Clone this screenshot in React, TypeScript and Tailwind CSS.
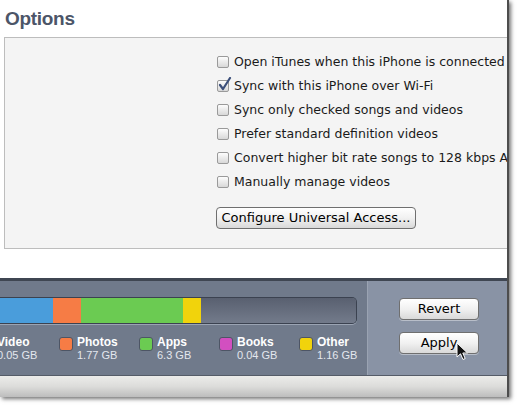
import React from "react";

type Opt = { label: string; checked?: boolean };

const options: Opt[] = [
  { label: "Open iTunes when this iPhone is connected" },
  { label: "Sync with this iPhone over Wi-Fi", checked: true },
  { label: "Sync only checked songs and videos" },
  { label: "Prefer standard definition videos" },
  { label: "Convert higher bit rate songs to 128 kbps AAC" },
  { label: "Manually manage videos" },
];

const legend = [
  { name: "Video", size: "0.05 GB", color: "bg-[#4a9ddb]" },
  { name: "Photos", size: "1.77 GB", color: "bg-[#f67c45]" },
  { name: "Apps", size: "6.3 GB", color: "bg-[#6bcb52]" },
  { name: "Books", size: "0.04 GB", color: "bg-[#d24fc0]" },
  { name: "Other", size: "1.16 GB", color: "bg-[#f1d30c]" },
];

function Checkbox({ checked }: { checked?: boolean }) {
  return (
    <div className="relative w-[12px] h-[12px] rounded-[2px] border border-[#9a9a9a] bg-gradient-to-b from-[#fdfdfd] to-[#d8d8d8] shrink-0">
      {checked && (
        <svg className="absolute left-[0px] top-[-4px]" width="14" height="15" viewBox="0 0 14 15">
          <path d="M2 8 L5 12 L12 1" fill="none" stroke="#3c4f7a" strokeWidth="2.2" strokeLinecap="round" strokeLinejoin="round" />
        </svg>
      )}
    </div>
  );
}

function MacButton({ children, className = "" }: { children: React.ReactNode; className?: string }) {
  return (
    <div
      className={`flex items-center justify-center h-[22px] rounded-[4px] border border-[#6f6f6f] bg-gradient-to-b from-[#ffffff] via-[#f1f1f1] to-[#d9d9d9] shadow-[0_1px_0_rgba(255,255,255,0.4)] text-[13px] text-black ${className}`}
      style={{ fontFamily: "'DejaVu Sans', sans-serif" }}
    >
      {children}
    </div>
  );
}

export default function App() {
  return (
    <div className="relative w-[517px] h-[406px] bg-white overflow-hidden">
      <div className="w-[509px] h-[397px] flex flex-col overflow-hidden border-r-2 border-[#4d4d4d] shadow-[2px_2px_4px_rgba(0,0,0,0.55)] bg-white">
        {/* top part */}
        <div className="h-[278px] bg-white pl-[4px] pt-[6px]">
          <div
            className="pl-[1px] text-[19px] font-bold text-[#4c5568] tracking-[-0.3px] leading-[26px]"
            style={{ fontFamily: "'Liberation Sans', Arial, sans-serif" }}
          >
            Options
          </div>
          <div className="mt-[5px] h-[212px] w-[520px] border border-[#bdbdbd] bg-[#f4f4f4] pl-[212px] pt-[12px]">
            <div className="flex flex-col" style={{ fontFamily: "'DejaVu Sans', sans-serif" }}>
              {options.map((o) => (
                <div key={o.label} className="h-[24px] flex items-center gap-[5px] whitespace-nowrap text-[12.5px] text-[#1a1a1a]">
                  <Checkbox checked={o.checked} />
                  <span>{o.label}</span>
                </div>
              ))}
            </div>
            <MacButton className="mt-[13px] w-[200px] -ml-[1px]">Configure Universal Access...</MacButton>
          </div>
        </div>

        {/* capacity bar */}
        <div className="h-[97px] flex border-t-[3px] border-[#3f4652]">
          <div className="w-[368px] bg-[#707a8b] pt-[16px] border-r border-[#9aa3b2]">
            <div className="flex h-[27px] w-[357px] rounded-r-[5px] overflow-hidden border-y border-r border-[#3b4250] shadow-[0_1px_0_#9ba4b3]">
              <div className="w-[53px] bg-[#4a9ddb]" />
              <div className="w-[28px] bg-[#f67c45]" />
              <div className="w-[102px] bg-[#6bcb52]" />
              <div className="w-[18px] bg-[#f1d30c]" />
              <div className="flex-1 bg-gradient-to-b from-[#596070] to-[#737b8b]" />
            </div>
            <div className="flex -ml-[21px] mt-[12px]" style={{ fontFamily: "'Liberation Sans', Arial, sans-serif" }}>
              {legend.map((l) => (
                <div key={l.name} className="w-[80px] flex gap-[4px] shrink-0">
                  <div className={`w-[14px] h-[14px] mt-[1px] rounded-[3px] border border-[#4d5565] ${l.color}`} />
                  <div className="flex flex-col">
                    <span className="text-[12px] font-bold text-white leading-[13px]">{l.name}</span>
                    <span className="text-[11px] text-[#e4e7ee] leading-[12px]">{l.size}</span>
                  </div>
                </div>
              ))}
            </div>
          </div>
          <div className="flex-1 bg-[#8993a5] flex flex-col items-start pl-[31px] pt-[17px] gap-[12px]">
            <MacButton className="w-[80px]">Revert</MacButton>
            <MacButton className="w-[80px]">Apply</MacButton>
          </div>
        </div>

        {/* bottom strip */}
        <div className="h-[22px] border-t border-[#555c68] bg-gradient-to-b from-[#ececea] via-[#dcdcda] to-[#bdbdbd]" />
      </div>

      {/* mouse cursor */}
      <svg className="absolute left-[456px] top-[342px]" width="13" height="19" viewBox="0 0 13 19">
        <path d="M1 1 L1 15 L4.5 11.8 L7 17.5 L9.2 16.5 L6.8 11 L11.5 11 Z" fill="#111" stroke="#fff" strokeWidth="1" strokeLinejoin="round" />
      </svg>
    </div>
  );
}
